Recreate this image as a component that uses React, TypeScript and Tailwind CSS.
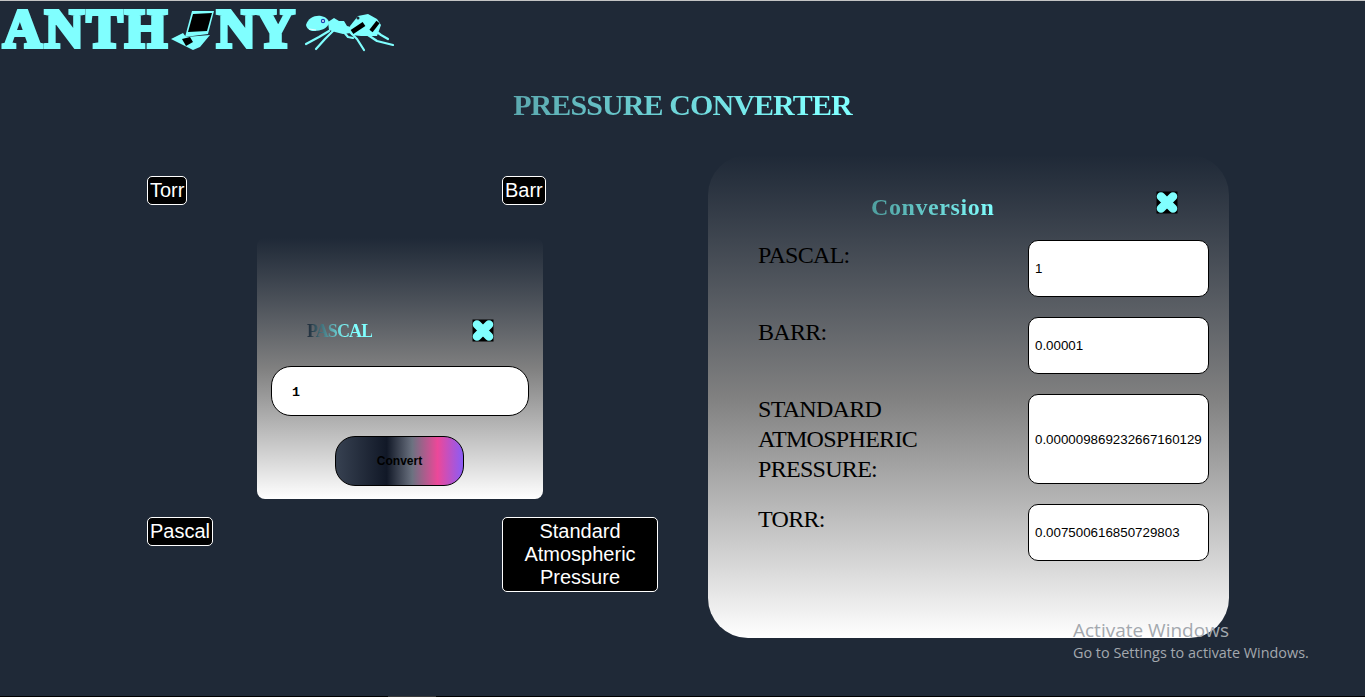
const Cross = () => (
  <svg viewBox="0 0 22 23" className="w-[22px] h-[23px]">
    <rect x="0.5" y="0.5" width="21" height="22" fill="#000" />
    <path d="M5 5.5 L17 17.5 M17 5.5 L5 17.5" stroke="#80ffff" strokeWidth="8.5" strokeLinecap="round" />
  </svg>
);

const Laptop = () => (
  <svg viewBox="0 0 44 44" className="w-[44px] h-[44px] mt-[5px] shrink-0">
    <path d="M22 3 L44 3 L38 26 L15 29 Z" fill="#80ffff" />
    <path d="M23 6 L42 5 L37 23 L18 24 Z" fill="#000" />
    <path d="M1 31 L13 25 L16 29 L40 27 L30 39 L23 42 Z" fill="#80ffff" />
    <path d="M12 31 L20 29 L23 34 L16 38 Z" fill="#000" />
  </svg>
);

const Ant = () => (
  <svg viewBox="0 0 95 42" className="w-[95px] h-[42px] ml-[6px] mt-[8px] shrink-0">
    <g stroke="#80ffff" strokeWidth="2.2" fill="none" strokeLinecap="round" strokeLinejoin="round">
      <path d="M28 20 L18 26 L5 33" />
      <path d="M32 20 L24 28 L15 38" />
      <path d="M42 20 L47 26 L52 27" />
      <path d="M48 20 L56 28 L63 39" />
      <path d="M64 22 L76 30 L92 34" />
      <path d="M72 18 L80 24 L87 28" />
    </g>
    <path d="M5 14 C7 7 14 4 20 5 C25 6 28 9 28 12 C27 17 20 20 13 20 C9 20 6 18 5 14 Z" fill="#80ffff" />
    <circle cx="22" cy="10" r="2.2" fill="#1e40af" />
    <circle cx="22" cy="10" r="0.9" fill="#fff" />
    <path d="M8 18 L15 19" stroke="#e5ffff" strokeWidth="1.2" />
    <path d="M27 11 L33 7 L38 10 L43 10 L46 15 L50 16 L50 22 L42 23 L34 21 L28 19 Z" fill="#80ffff" />
    <path d="M49 15 L57 5 L67 3 L76 8 L80 14 L76 25 L60 25 L50 24 Z" fill="#80ffff" />
    <path d="M51 21 L63 13" stroke="#000" strokeWidth="5" />
    <path d="M70 20 L77 11" stroke="#000" strokeWidth="4" />
    <circle cx="57" cy="7" r="1.5" fill="#1f2937" />
  </svg>
);

const Logo = () => (
  <div className="flex items-start h-[52px] pl-[3px] pt-[2px]">
    <span className="font-['Liberation_Serif',serif] font-bold text-[54px] leading-[52px] tracking-[2.7px] text-[#80ffff] [-webkit-text-stroke:4px_#80ffff]">
      ANTH
    </span>
    <Laptop />
    <span className="ml-[3px] font-['Liberation_Serif',serif] font-bold text-[54px] leading-[52px] text-[#80ffff] [-webkit-text-stroke:4px_#80ffff]">
      NY
    </span>
    <Ant />
  </div>
);

const UnitButton = ({ label, wide }: { label: string; wide?: boolean }) => (
  <button
    className={`bg-black text-white border border-white rounded-[5px] px-[2px] py-[2px] text-[20px] leading-[23px] font-['Liberation_Sans',sans-serif] justify-self-start ${
      wide ? "w-[156px]" : ""
    }`}
  >
    {label}
  </button>
);

const rows = [
  { label: "PASCAL:", value: "1", h: "h-[57px]" },
  { label: "BARR:", value: "0.00001", h: "h-[57px]" },
  { label: "STANDARD ATMOSPHERIC PRESSURE:", value: "0.000009869232667160129", h: "h-[90px]" },
  { label: "TORR:", value: "0.007500616850729803", h: "h-[57px]" },
];

export default function App() {
  return (
    <div className="relative h-[697px] overflow-hidden bg-[#1f2937] border-t border-t-[#c4c4c4]">
      <Logo />

      <h1 className="mt-[32px] text-center font-['Liberation_Serif',serif] font-bold text-[30px] leading-[40px] tracking-[-0.9px] bg-gradient-to-r from-[#1f2937] via-[#80ffff] via-[60%] to-[#80ffff] bg-clip-text text-transparent">
        PRESSURE CONVERTER
      </h1>

      <div className="flex items-start mt-[30px]">
        <div className="ml-[147px] w-[511px] mt-[21px] shrink-0">
          <div className="grid grid-cols-[355px_1fr]">
            <UnitButton label="Torr" />
            <UnitButton label="Barr" />
          </div>

          <div className="ml-[110px] mt-[33px] w-[286px] h-[261px] rounded-lg bg-gradient-to-b from-[#1f2937] via-[#808080] to-white px-[14px] pt-[81px]">
            <div className="flex items-center justify-between pl-[36px] pr-[35px] h-[23px]">
              <span className="mt-[1px] font-['Liberation_Serif',serif] font-bold text-[18px] tracking-[-0.9px] bg-gradient-to-r from-[#1f2937] via-[#80ffff] via-[60%] to-[#80ffff] bg-clip-text text-transparent">
                PASCAL
              </span>
              <Cross />
            </div>
            <input
              readOnly
              value="1"
              className="mt-[24px] w-[258px] h-[50px] rounded-[20px] bg-white border border-black pl-[20px] pt-[2px] font-['Liberation_Mono',monospace] font-bold text-[13.33px] text-black outline-none"
            />
            <div className="flex justify-center mt-[20px] pr-[1px]">
              <button className="w-[129px] h-[50px] rounded-[20px] border border-black text-black font-bold text-[12px] font-['Liberation_Sans',sans-serif] [background-image:linear-gradient(to_right,#374151,#111827_40%,#6b7280_60%,#ec4899_80%,#8b5cf6)]">
                Convert
              </button>
            </div>
          </div>

          <div className="grid grid-cols-[355px_1fr] mt-[18px] items-start">
            <UnitButton label="Pascal" />
            <UnitButton label="Standard Atmospheric Pressure" wide />
          </div>
        </div>

        <div className="ml-[50px] w-[521px] h-[483px] rounded-[40px] bg-gradient-to-b from-[#1f2937] via-[#808080] to-white pl-[50px] pr-[20px] pt-[36px]">
          <div className="flex items-start h-[49px]">
            <span className="ml-[113px] mt-[1px] font-['Liberation_Serif',serif] font-bold text-[24px] leading-[30px] w-[123px] whitespace-nowrap bg-gradient-to-r from-[#4f9f9f] to-[#80ffff] bg-clip-text text-transparent tracking-[0.6px]">
              Conversion
            </span>
            <div className="ml-[162px]">
              <Cross />
            </div>
          </div>
          <div className="flex flex-col gap-[20px]">
            {rows.map((r) => (
              <div key={r.label} className="flex items-start justify-between">
                <div className="w-[180px] font-['Liberation_Serif',serif] text-[24px] leading-[30px] tracking-[-0.7px] text-black">
                  {r.label}
                </div>
                <input
                  readOnly
                  value={r.value}
                  className={`w-[181px] ${r.h} rounded-[10px] bg-white border border-black pl-[6px] pr-0 text-[13.33px] text-black font-['Liberation_Sans',sans-serif] outline-none`}
                />
              </div>
            ))}
          </div>
        </div>
      </div>

      <div className="absolute left-[1073px] top-[617px] font-['Open_Sans',sans-serif] text-[#a3a8ae]">
        <div className="text-[19px] leading-[24px]">Activate Windows</div>
        <div className="text-[14.4px] leading-[20px] mt-[1px]">Go to Settings to activate Windows.</div>
      </div>

      <div className="absolute left-0 right-0 bottom-0 h-[1px] bg-black">
        <div className="ml-[388px] w-[48px] h-full bg-[#3a3a3a]" />
      </div>
    </div>
  );
}
